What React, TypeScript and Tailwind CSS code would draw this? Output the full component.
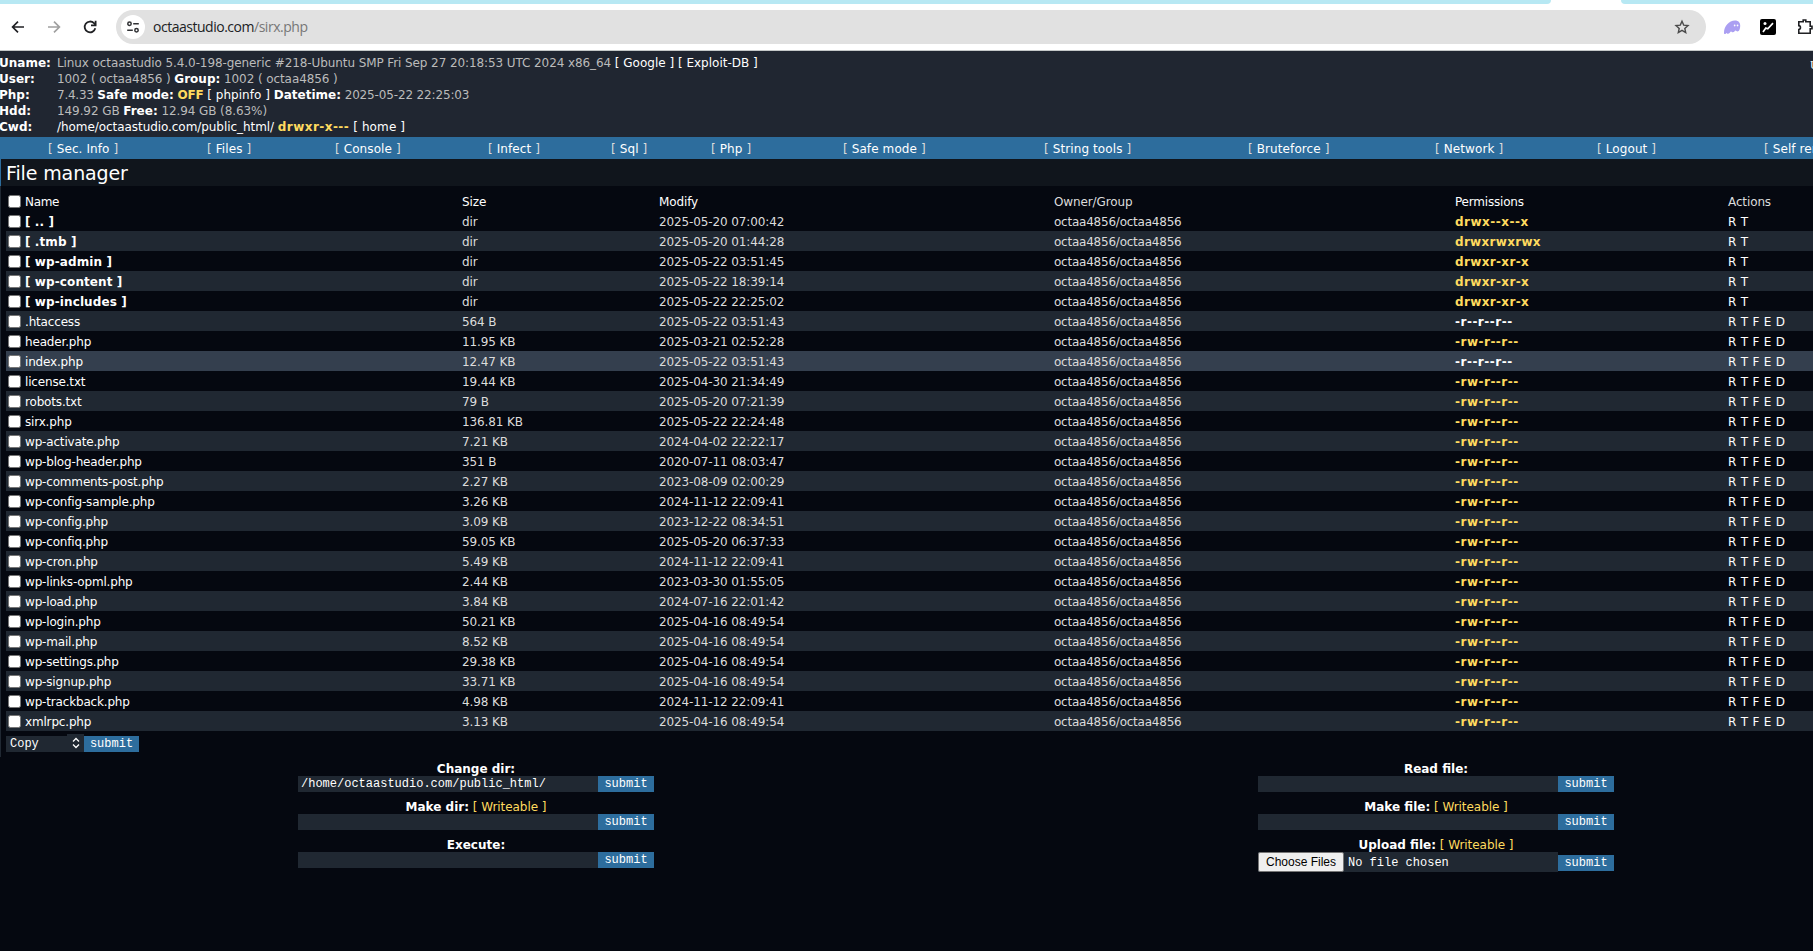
import React from 'react';

type Entry = [string, string, string, string];

const entries: Entry[] = [
  ['[ .. ]', 'dir', '2025-05-20 07:00:42', 'drwx--x--x'],
  ['[ .tmb ]', 'dir', '2025-05-20 01:44:28', 'drwxrwxrwx'],
  ['[ wp-admin ]', 'dir', '2025-05-22 03:51:45', 'drwxr-xr-x'],
  ['[ wp-content ]', 'dir', '2025-05-22 18:39:14', 'drwxr-xr-x'],
  ['[ wp-includes ]', 'dir', '2025-05-22 22:25:02', 'drwxr-xr-x'],
  ['.htaccess', '564 B', '2025-05-22 03:51:43', '-r--r--r--'],
  ['header.php', '11.95 KB', '2025-03-21 02:52:28', '-rw-r--r--'],
  ['index.php', '12.47 KB', '2025-05-22 03:51:43', '-r--r--r--'],
  ['license.txt', '19.44 KB', '2025-04-30 21:34:49', '-rw-r--r--'],
  ['robots.txt', '79 B', '2025-05-20 07:21:39', '-rw-r--r--'],
  ['sirx.php', '136.81 KB', '2025-05-22 22:24:48', '-rw-r--r--'],
  ['wp-activate.php', '7.21 KB', '2024-04-02 22:22:17', '-rw-r--r--'],
  ['wp-blog-header.php', '351 B', '2020-07-11 08:03:47', '-rw-r--r--'],
  ['wp-comments-post.php', '2.27 KB', '2023-08-09 02:00:29', '-rw-r--r--'],
  ['wp-config-sample.php', '3.26 KB', '2024-11-12 22:09:41', '-rw-r--r--'],
  ['wp-config.php', '3.09 KB', '2023-12-22 08:34:51', '-rw-r--r--'],
  ['wp-confiq.php', '59.05 KB', '2025-05-20 06:37:33', '-rw-r--r--'],
  ['wp-cron.php', '5.49 KB', '2024-11-12 22:09:41', '-rw-r--r--'],
  ['wp-links-opml.php', '2.44 KB', '2023-03-30 01:55:05', '-rw-r--r--'],
  ['wp-load.php', '3.84 KB', '2024-07-16 22:01:42', '-rw-r--r--'],
  ['wp-login.php', '50.21 KB', '2025-04-16 08:49:54', '-rw-r--r--'],
  ['wp-mail.php', '8.52 KB', '2025-04-16 08:49:54', '-rw-r--r--'],
  ['wp-settings.php', '29.38 KB', '2025-04-16 08:49:54', '-rw-r--r--'],
  ['wp-signup.php', '33.71 KB', '2025-04-16 08:49:54', '-rw-r--r--'],
  ['wp-trackback.php', '4.98 KB', '2024-11-12 22:09:41', '-rw-r--r--'],
  ['xmlrpc.php', '3.13 KB', '2025-04-16 08:49:54', '-rw-r--r--'],
];

const menu: [string, string][] = [
  ['Sec. Info', 'w-[159px]'],
  ['Files', 'w-[128px]'],
  ['Console', 'w-[153px]'],
  ['Infect', 'w-[123px]'],
  ['Sql', 'w-[100px]'],
  ['Php', 'w-[132px]'],
  ['Safe mode', 'w-[201px]'],
  ['String tools', 'w-[204px]'],
  ['Bruteforce', 'w-[187px]'],
  ['Network', 'w-[162px]'],
  ['Logout', 'w-[167px]'],
  ['Self remove', 'w-[160px]'],
];

const rowGrid = 'grid h-5 grid-cols-[456px_197px_395px_401px_273px_200px] items-center [&>div]:pt-0.5';

const permTracking = (perm: string) =>
  perm === 'drwxrwxrwx' ? 'tracking-[0.3px]' : perm === 'drwxr-xr-x' ? 'tracking-[0.35px]' : 'tracking-[0.5px]';

function Check() {
  return <span className="-mt-px mr-1 ml-0.5 inline-block size-[13px] shrink-0 rounded-[2.5px] border border-[#767676] bg-white" />;
}

function BrowserBar() {
  return (
    <div className="w-full bg-white">
      <div className="flex h-1 bg-white">
        <div className="h-1 w-[1551px] rounded-br-[4px] bg-[#b7e8f3]" />
        <div className="ml-[70px] h-1 flex-1 rounded-bl-[4px] bg-[#b7e8f3]" />
      </div>
      <div className="flex h-[46px] items-center">
        <svg className="ml-[10px] size-4 shrink-0" viewBox="0 0 16 16" fill="none" stroke="#202124" strokeWidth="1.7">
          <path d="M14 8H3M8 2.6 2.6 8 8 13.4" />
        </svg>
        <svg className="ml-5 size-4 shrink-0" viewBox="0 0 16 16" fill="none" stroke="#a0a0a0" strokeWidth="1.7">
          <path d="M2 8h11M8 2.6 13.4 8 8 13.4" />
        </svg>
        <svg className="ml-5 size-4 shrink-0" viewBox="0 0 16 16" fill="none" stroke="#202124" strokeWidth="1.8">
          <path d="M13.3 9.3A5.4 5.4 0 1 1 12 4.2l1.6 1.7" />
          <path d="M13.6 1.8v4.6H9" />
        </svg>
        <div className="ml-[18px] flex h-[34px] w-[1590px] shrink-0 items-center rounded-full bg-[#e1e1e1]">
          <div className="ml-[5px] flex size-6 items-center justify-center rounded-full bg-white">
            <svg className="size-3.5" viewBox="0 0 14 14" fill="none" stroke="#303134" strokeWidth="1.5">
              <circle cx="3.5" cy="3.8" r="1.7" />
              <circle cx="10.5" cy="10.2" r="1.7" />
              <path d="M7.2 3.8h5.600M1.200 10.200h5.600" />
            </svg>
          </div>
          <div className="ml-2 flex-1 font-['Open_Sans','Noto_Sans',sans-serif] text-[14px] tracking-[-0.48px] text-[#202124]">
            octaastudio.com<span className="text-[#777]">/sirx.php</span>
          </div>
          <svg className="mr-4 size-4" viewBox="0 0 16 16" fill="none" stroke="#4a4a4a" strokeWidth="1.4">
            <path d="m8 2.200 1.700 3.900 4.300.4-3.200 2.900.9 4.200L8 11.400l-3.700 2.200.9-4.200L2 6.500l4.300-.4z" />
          </svg>
        </div>
        <svg className="ml-[17px] size-[18px] shrink-0" viewBox="0 0 18 18">
          <path fill="#ab9ff2" d="M1 14.500C1 8.500 6 2.500 12 2.500c3.500 0 5.200 2.200 5.200 5 0 3-1 6-2.700 6-1.200 0-1-1-1.900-1s-1.300 1.800-2.700 1.800c-1.200 0-1-.9-1.800-.9S6.500 15.700 4.800 15.700c-.8 0-.7-.8-1.200-.8s-.8 1.100-1.600 1.100S1 15.500 1 14.500z" />
          <rect x="10.800" y="6.500" width="1.700" height="1.900" rx=".8" fill="#fff" />
          <rect x="13.700" y="6.500" width="1.700" height="1.900" rx=".8" fill="#fff" />
        </svg>
        <svg className="ml-[19px] size-4 shrink-0" viewBox="0 0 16 16">
          <rect width="16" height="16" rx="2" fill="#000" />
          <circle cx="5" cy="4.500" r="1.500" fill="#fff" />
          <path d="m3 13 2.800-4 2 .8L13 4.200" stroke="#fff" strokeWidth="1.700" fill="none" />
        </svg>
        <svg className="ml-[21px] h-[18px] w-[17px] shrink-0" viewBox="0 0 17 18" fill="none" stroke="#202124" strokeWidth="1.600">
          <path d="M1.800 3.800h4.400V2h2.600v1.800h4.400v4.400H15v2.600h-1.800v4.400H1.800v-3.700c2.200 0 2.200-3.900 0-3.900z" />
        </svg>
      </div>
      <div className="h-px bg-[#c4c8c8]" />
    </div>
  );
}

function B({ children }: { children: React.ReactNode }) {
  return <b className="font-bold tracking-[0px] text-white">{children}</b>;
}

function InfoLine({ label, children }: { label: string; children: React.ReactNode }) {
  return (
    <div className="flex h-4 items-center whitespace-pre">
      <div className="-ml-px w-[58px]"><B>{label}</B></div>
      <div>{children}</div>
    </div>
  );
}

function Submit({ width = 'w-14' }: { width?: string }) {
  return (
    <button className={`h-4 ${width} bg-[#2d6d9d] font-['Liberation_Mono',monospace] text-[12px] leading-4 tracking-normal text-white`}>submit</button>
  );
}

function Tool({ label, writeable, value }: { label: string; writeable?: boolean; value?: string }) {
  return (
    <div className="h-[38px] w-[356px]">
      <div className="h-4 text-center leading-[18px] tracking-[-0.05px] whitespace-pre">
        <B>{label}</B>
        {writeable && <span className="text-[#ffdb5f]"> [ Writeable ]</span>}
      </div>
      {label === 'Upload file:' ? (
        <div className="flex h-5 items-center">
          <div className="flex h-5 w-[300px] items-center bg-[#202832]">
            <span className="flex h-5 w-[86px] items-center justify-center rounded-[2px] border border-[#767676] bg-[#efefef] font-['Liberation_Sans',sans-serif] text-[12px] tracking-normal text-black">Choose Files</span>
            <span className="ml-1 pt-0.5 font-['Liberation_Mono',monospace] text-[12px] tracking-normal text-white">No file chosen</span>
          </div>
          <div className="mt-0.5 flex"><Submit /></div>
        </div>
      ) : (
        <div className="flex h-4">
          <div className="w-[300px] bg-[#202832] pl-[3px] font-['Liberation_Mono',monospace] text-[12px] leading-4 tracking-normal text-white">{value}</div>
          <Submit />
        </div>
      )}
    </div>
  );
}

export default function App() {
  return (
    <div className="h-[951px] w-[1813px] overflow-hidden bg-[#050810] font-['DejaVu_Sans',sans-serif] text-[12px] leading-4 tracking-[-0.12px] text-[#dcdcdc]">
      <BrowserBar />
      <div className="flex h-[86px] justify-between bg-[#202631] pt-1 tracking-[-0.09px] text-[#bbb]">
        <div>
          <InfoLine label="Uname:">
            Linux octaastudio 5.4.0-198-generic #218-Ubuntu SMP Fri Sep 27 20:18:53 UTC 2024 x86_64 <span className="tracking-[0px] text-white">[ Google ] [ Exploit-DB ]</span>
          </InfoLine>
          <InfoLine label="User:">1002 ( octaa4856 ) <B>Group:</B> 1002 ( octaa4856 )</InfoLine>
          <InfoLine label="Php:">
            <span className="tracking-[-0.25px]">7.4.33 </span><B>Safe mode:</B> <b className="tracking-[-0.25px] text-[#ffdb5f]">OFF</b> <span className="tracking-[0.05px] text-white">[ phpinfo ]</span> <B>Datetime:</B><span className="tracking-[-0.15px]"> 2025-05-22 22:25:03</span>
          </InfoLine>
          <InfoLine label="Hdd:">149.92 GB <B>Free:</B> 12.94 GB (8.63%)</InfoLine>
          <InfoLine label="Cwd:">
            <span className="tracking-[-0.06px] text-white">/home/octaastudio.com/public_html/ </span>
            <b className="tracking-[0.45px] text-[#ffdb5f]">drwxr-x---</b>
            <span className="tracking-[0.12px] text-white"> [ home ]</span>
          </InfoLine>
        </div>
        <div className="w-[3px] overflow-hidden pt-0.5 font-['Liberation_Serif',serif] text-[12px] text-white">U</div>
      </div>
      <div className="flex h-[22px] items-center bg-[#2d6d9d] pt-0.5 pl-12 tracking-[0.1px] whitespace-pre">
        {menu.map(([name, width]) => (
          <div key={name} className={`shrink-0 ${width}`}>[ <span className="text-white">{name}</span> ]</div>
        ))}
      </div>
      <div className="h-[27px] border-l border-[#2d6d9d] bg-[#10151c] pl-[5px] text-[19px] leading-[29px] tracking-[-0.12px] text-white">File manager</div>
      <div className="h-[571px] border-l border-[#202832] pt-[5px] pl-[5px] whitespace-nowrap">
        <div className={`${rowGrid} text-white`}>
          <div className="flex items-center tracking-[-0.3px]"><Check />Name</div>
          <div>Size</div>
          <div>Modify</div>
          <div className="text-[#dcdcdc]">Owner/Group</div>
          <div className="tracking-[-0.2px]">Permissions</div>
          <div className="text-[#dcdcdc]">Actions</div>
        </div>
        {entries.map(([name, size, date, perm], i) => (
          <div key={name} className={`${rowGrid} ${i === 7 ? 'bg-[#343f4e]' : i % 2 ? 'bg-[#202832]' : ''}`}>
            <div className="flex items-center tracking-[-0.17px] text-white">
              <Check />
              {i < 5 ? <b className="tracking-[0.1px]">{name}</b> : name}
            </div>
            <div>{size}</div>
            <div>{date}</div>
            <div className="tracking-[-0.23px]">octaa4856/octaa4856</div>
            <div className={`font-bold ${permTracking(perm)} ${perm === '-r--r--r--' ? 'text-white' : 'text-[#ffdb5f]'}`}>{perm}</div>
            <div className="tracking-[0.3px] text-white">{i < 5 ? 'R T' : 'R T F E D'}</div>
          </div>
        ))}
        <div className="mt-[3px] flex items-end tracking-normal">
          <div className="flex items-end">
            <div className="h-4 w-[61px] bg-[#202832] pl-1 font-['Liberation_Mono',monospace] text-[12px] leading-4 text-white">Copy</div>
            <div className="flex h-[18px] w-[17px] items-center justify-center bg-[#202832]">
              <svg className="h-3 w-2" viewBox="0 0 8 12" fill="none" stroke="#fff" strokeWidth="1.300">
                <path d="m1 4.500 3-3 3 3M1 7.500l3 3 3-3" />
              </svg>
            </div>
          </div>
          <Submit width="w-[55px]" />
        </div>
      </div>
      <div className="flex pt-[3px]">
        <div className="ml-[298px] w-[356px]">
          <Tool label="Change dir:" value="/home/octaastudio.com/public_html/" />
          <Tool label="Make dir:" writeable />
          <Tool label="Execute:" />
        </div>
        <div className="ml-[604px] w-[356px]">
          <Tool label="Read file:" />
          <Tool label="Make file:" writeable />
          <Tool label="Upload file:" writeable />
        </div>
      </div>
    </div>
  );
}
